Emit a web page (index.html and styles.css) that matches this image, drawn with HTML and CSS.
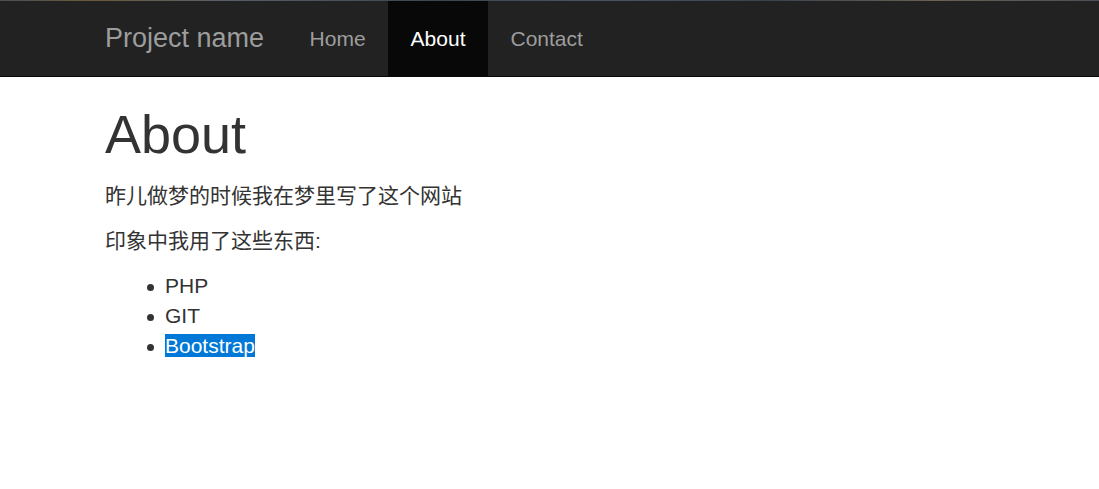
FILE: index.html
```html
<!DOCTYPE html>
<html lang="zh-CN">
<head>
    <meta charset="UTF-8">
    <meta name="viewport" content="width=device-width, initial-scale=1.0">
    <title>About - Project name</title>
    <link rel="stylesheet" href="styles.css">
</head>
<body>

    <div class="top-strip"></div>

    <nav class="navbar">
        <div class="container navbar-inner">
            <a href="#" class="brand">Project name</a>
            <ul class="nav">
                <li><a href="#">Home</a></li>
                <li class="active"><a href="#">About</a></li>
                <li><a href="#">Contact</a></li>
            </ul>
        </div>
    </nav>

    <div class="container content">
        <h1>About</h1>
        <p>昨儿做梦的时候我在梦里写了这个网站</p>
        <p>印象中我用了这些东西:</p>
        <ul class="tools">
            <li>PHP</li>
            <li>GIT</li>
            <li><span class="selected">Bootstrap</span></li>
        </ul>
    </div>

</body>
</html>
```

FILE: styles.css
```css
body {
    font-family: "Liberation Sans", Arial, "Noto Sans CJK SC", sans-serif;
    font-size: 21px;
    line-height: 30px;
    color: #333;
    background-color: #fff;
    margin: 0;
    padding: 0;
}

.top-strip {
    height: 1px;
    background: linear-gradient(90deg, #4a4f55 0%, #6b5a3a 8%, #5a6068 20%, #3e4654 40%, #4b5363 55%, #3a4350 70%, #6a6252 85%, #4a5058 100%);
}

.container {
    width: 1099px;
    box-sizing: border-box;
    padding: 0 90px;
}

.navbar {
    background-color: #222;
    border-bottom: 1px solid #080808;
}

.navbar-inner {
    display: flex;
    align-items: stretch;
    height: 75px;
}

.brand {
    display: block;
    padding: 0 23px 0 15px;
    font-size: 27px;
    line-height: 75px;
    color: #9d9d9d;
    text-decoration: none;
}

.nav {
    display: flex;
    list-style: none;
    margin: 0;
    padding: 0;
}

.nav li a {
    display: block;
    padding: 0 22.5px;
    line-height: 75px;
    font-size: 21px;
    color: #9d9d9d;
    text-decoration: none;
}

.nav li.active a {
    background-color: #080808;
    color: #fff;
}

.content {
    padding-left: 105px;
}

h1 {
    font-size: 54px;
    font-weight: 500;
    line-height: 1.1;
    margin: 28px 0 17px;
}

p {
    margin: 0 0 15px;
}

.tools {
    list-style: none;
    margin: 0 0 15px;
    padding-left: 60px;
}

.tools li::before {
    content: "";
    display: inline-block;
    width: 7px;
    height: 7px;
    border-radius: 50%;
    background-color: #333;
    margin-left: -18px;
    margin-right: 11px;
    vertical-align: middle;
}

.selected {
    background-color: #0078d7;
    color: #fff;
}
```
